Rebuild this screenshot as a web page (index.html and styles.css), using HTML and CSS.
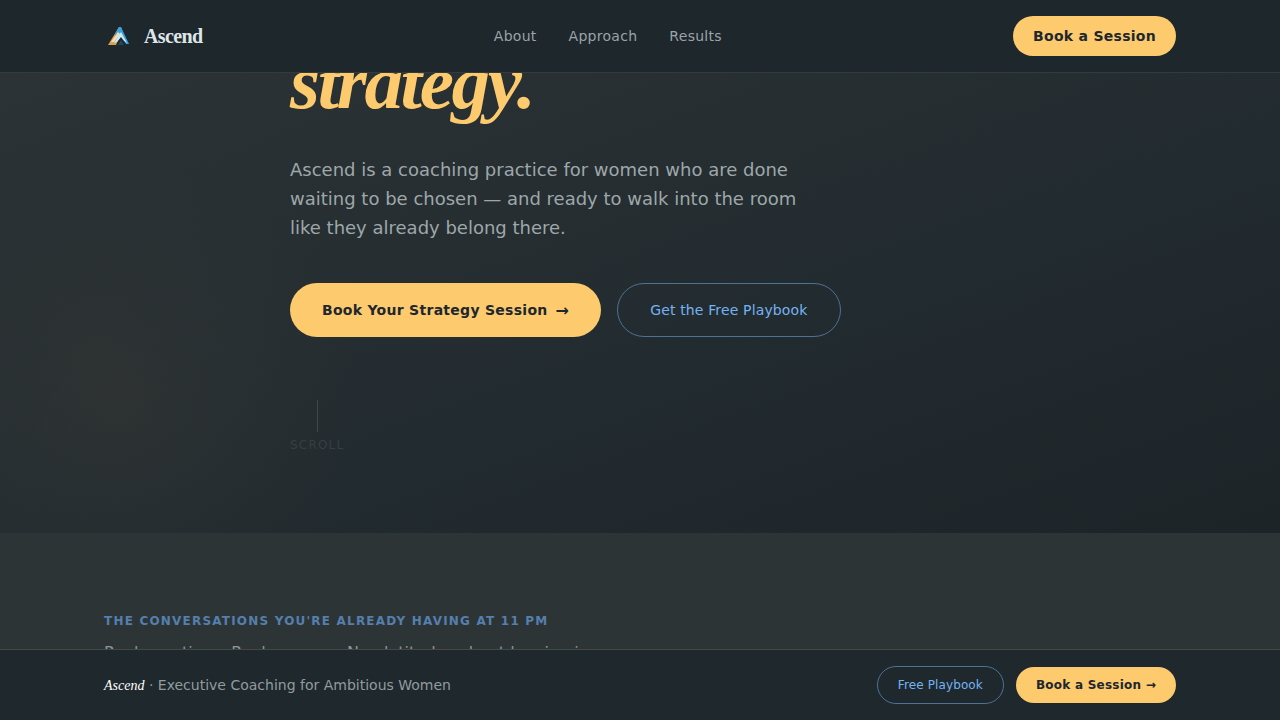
FILE: index.html
```html
<!DOCTYPE html>
<html lang="en">
<head>
    <meta charset="UTF-8">
    <meta name="viewport" content="width=device-width, initial-scale=1">
    <title>Ascend</title>
    <link rel="stylesheet" href="styles.css">
</head>
<body>
<header class="nav">
    <div class="container nav-inner">
        <a class="brand" href="#">
            <svg class="brand-icon" viewBox="0 0 28 28" aria-hidden="true">
                <path d="M4 23 L15 5 L17 5 L18 9 L12 23 Z" fill="#d8a152"/>
                <path d="M11 12 L15 5 L17 5 L25 22 L22 22 L16 11 L12 17 Z" fill="#3d9fe0"/>
                <path d="M7 20 L14 10 L16 12 L10 20 Z" fill="#f0dfb8"/>
                <path d="M10 21 L17 10 L23 21 L20 19 L17 15 L13 20 Z" fill="#c9ecff"/>
                <path d="M14 23 L17 18 L20 23 Z" fill="#23475c"/>
            </svg>
            <span>Ascend</span>
        </a>
        <nav class="nav-links">
            <a href="#about">About</a>
            <a href="#approach">Approach</a>
            <a href="#results">Results</a>
        </nav>
        <a class="btn btn-gold btn-nav" href="#book">Book a Session</a>
    </div>
</header>
<main>
    <section class="hero">
        <div class="hero-inner">
            <h1><em>strategy.</em></h1>
            <p class="hero-sub">Ascend is a coaching practice for women who are done waiting to be chosen — and ready to walk into the room like they already belong there.</p>
            <div class="hero-actions">
                <a class="btn btn-gold btn-large" href="#book">Book Your Strategy Session <span class="arrow">→</span></a>
                <a class="btn btn-outline btn-large" href="#playbook">Get the Free Playbook</a>
            </div>
            <div class="scroll-hint">
                <span class="scroll-line"></span>
                <span>Scroll</span>
            </div>
        </div>
    </section>
    <section class="talks" id="about">
        <div class="container">
            <h2>The conversations you're already having at 11 PM</h2>
            <p>Real questions. Real answers. No platitudes about leaning in.</p>
        </div>
    </section>
</main>
<footer class="bar">
    <div class="container bar-inner">
        <p class="bar-text"><em>Ascend</em> · Executive Coaching for Ambitious Women</p>
        <div class="bar-actions">
            <a class="btn btn-outline btn-small" href="#playbook">Free Playbook</a>
            <a class="btn btn-gold btn-small" href="#book">Book a Session →</a>
        </div>
    </div>
</footer>
</body>
</html>
```
FILE: styles.css
```css
*{
    box-sizing:border-box;
    margin:0;
    padding:0;
}
body{
    background:#2d3436;
    color:#dfe6e9;
    font-family:"DejaVu Sans", sans-serif;
    overflow:hidden;
}
a{
    color:inherit;
    text-decoration:none;
}
.container{
    max-width:1120px;
    margin:0 auto;
    padding:0 24px;
}
.nav{
    position:fixed;
    top:0;
    left:0;
    right:0;
    z-index:10;
    background:#1e272c;
    border-bottom:1px solid #333b3e;
}
.nav-inner{
    display:flex;
    align-items:center;
    justify-content:space-between;
    height:72px;
}
.brand{
    display:flex;
    align-items:center;
    gap:12px;
    font-family:"Liberation Serif", serif;
    font-size:20px;
    font-weight:700;
    letter-spacing:-0.03em;
}
.brand-icon{
    width:28px;
    height:28px;
}
.nav-links{
    display:flex;
    gap:32px;
    font-size:14px;
    letter-spacing:0.02em;
    color:#9ba3a6;
}
.btn{
    display:inline-flex;
    align-items:center;
    justify-content:center;
    gap:8px;
    border-radius:40px;
    white-space:nowrap;
}
.btn-gold{
    background:#fdcb6e;
    color:#1e272e;
    font-weight:700;
    letter-spacing:0.02em;
}
.btn-outline{
    border:1px solid #4d7294;
    color:#74b3f3;
    letter-spacing:0.01em;
}
.btn-nav{
    padding:12px 20px;
    font-size:14px;
    line-height:16px;
}
.btn-large{
    padding:0 32px;
    height:54px;
    font-size:14px;
}
.arrow{
    font-size:16px;
}
.btn-small{
    padding:10px 20px;
    font-size:12px;
    line-height:16px;
}
.hero{
    background:
        radial-gradient(circle 240px at 9% 75%, rgba(80, 70, 60, .2), transparent),
        linear-gradient(160deg, #2d3436 0%, #222b2f 60%, #1c2428 100%);
}
.hero-inner{
    max-width:700px;
    margin:0 auto;
    padding:44px 0 80px;
}
.hero h1{
    color:#fdcb6e;
    font-family:"Liberation Serif", serif;
    font-size:77px;
    font-weight:700;
    line-height:76px;
    letter-spacing:-0.03em;
}
.hero-sub{
    max-width:520px;
    margin-top:35px;
    color:#9ea7aa;
    font-size:18px;
    line-height:29px;
}
.hero-actions{
    display:flex;
    flex-wrap:wrap;
    gap:16px;
    margin-top:41px;
}
.scroll-hint{
    display:inline-flex;
    flex-direction:column;
    align-items:center;
    gap:5px;
    margin-top:63px;
    color:#363f42;
    font-size:12px;
    line-height:16px;
    letter-spacing:0.1em;
    text-transform:uppercase;
}
.scroll-line{
    width:1px;
    height:32px;
    background:#3d4649;
}
.talks{
    background:#2d3436;
    padding:80px 0;
}
.talks h2{
    color:#557fad;
    font-size:12px;
    line-height:16px;
    letter-spacing:0.1em;
    text-transform:uppercase;
}
.talks p{
    margin-top:11px;
    color:#8c9598;
    font-size:16px;
    line-height:26px;
}
.bar{
    position:fixed;
    bottom:0;
    left:0;
    right:0;
    z-index:10;
    background:#1e282d;
    border-top:1px solid #454845;
}
.bar-inner{
    display:flex;
    align-items:center;
    justify-content:space-between;
    height:70px;
}
.bar-text{
    color:#929b9e;
    font-size:14px;
}
.bar-text em{
    color:#fff;
    font-family:"Liberation Serif", serif;
}
.bar-actions{
    display:flex;
    align-items:center;
    gap:12px;
}
```
